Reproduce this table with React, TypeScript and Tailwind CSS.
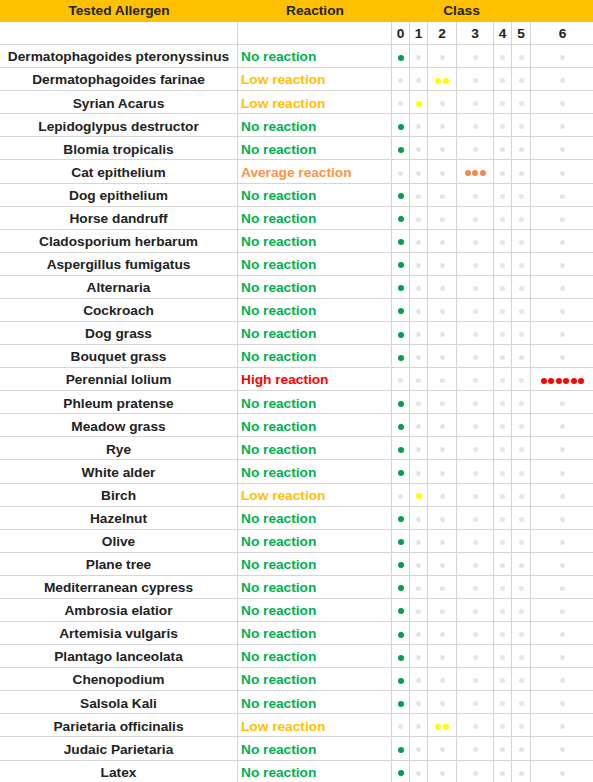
import React from "react";

type Level = "no" | "low" | "avg" | "high";
const rows: [string, Level, number][] = [
  ["Dermatophagoides pteronyssinus", "no", 0],
  ["Dermatophagoides farinae", "low", 2],
  ["Syrian Acarus", "low", 1],
  ["Lepidoglypus destructor", "no", 0],
  ["Blomia tropicalis", "no", 0],
  ["Cat epithelium", "avg", 3],
  ["Dog epithelium", "no", 0],
  ["Horse dandruff", "no", 0],
  ["Cladosporium herbarum", "no", 0],
  ["Aspergillus fumigatus", "no", 0],
  ["Alternaria", "no", 0],
  ["Cockroach", "no", 0],
  ["Dog grass", "no", 0],
  ["Bouquet grass", "no", 0],
  ["Perennial lolium", "high", 6],
  ["Phleum pratense", "no", 0],
  ["Meadow grass", "no", 0],
  ["Rye", "no", 0],
  ["White alder", "no", 0],
  ["Birch", "low", 1],
  ["Hazelnut", "no", 0],
  ["Olive", "no", 0],
  ["Plane tree", "no", 0],
  ["Mediterranean cypress", "no", 0],
  ["Ambrosia elatior", "no", 0],
  ["Artemisia vulgaris", "no", 0],
  ["Plantago lanceolata", "no", 0],
  ["Chenopodium", "no", 0],
  ["Salsola Kali", "no", 0],
  ["Parietaria officinalis", "low", 2],
  ["Judaic Parietaria", "no", 0],
  ["Latex", "no", 0],
];

const labels: Record<Level, string> = {
  no: "No reaction",
  low: "Low reaction",
  avg: "Average reaction",
  high: "High reaction",
};
const textColor: Record<Level, string> = {
  no: "text-[#00b050]",
  low: "text-[#ffc000]",
  avg: "text-[#f79646]",
  high: "text-[#ff0000]",
};
const dotColor: Record<Level, string> = {
  no: "bg-[#00a050]",
  low: "bg-[#ffff00]",
  avg: "bg-[#f08a4b]",
  high: "bg-[#ff0000]",
};

const cell = "border-r border-b border-[#d6d6d6] flex items-center pt-[3px]";

function Dots({ n, active, level }: { n: number; active: boolean; level: Level }) {
  if (!active) {
    return <span className="w-[5px] h-[5px] rounded-full bg-[#e6e6e2]" />;
  }
  const count = Math.max(1, n);
  return (
    <span className="flex gap-[1.5px]">
      {Array.from({ length: count }).map((_, i) => (
        <span key={i} className={`w-[6px] h-[6px] rounded-full ${dotColor[level]}`} />
      ))}
    </span>
  );
}

export default function App() {
  return (
    <div
      className="w-[593px] h-[782px] overflow-hidden bg-white text-[13.7px] font-bold text-[#222]"
      style={{ fontFamily: '"Liberation Sans", Arial, sans-serif' }}
    >
      <div className="grid w-[595px] grid-cols-[238px_154px_18px_18px_29px_37px_18px_19px_64px] grid-rows-[22px_repeat(33,23.08px)]">
        <div className="bg-[#ffc000] flex items-center justify-center pt-[1px]">Tested Allergen</div>
        <div className="bg-[#ffc000] flex items-center justify-center pt-[1px]">Reaction</div>
        <div className="bg-[#ffc000] col-span-6 flex items-center justify-center pt-[1px]">Class</div>
        <div className="bg-[#ffc000]" />

        <div className={cell} />
        <div className={cell} />
        {[0, 1, 2, 3, 4, 5, 6].map((c) => (
          <div key={c} className={`${cell} justify-center`}>
            {c}
          </div>
        ))}

        {rows.map(([name, level, cls]) => (
          <React.Fragment key={name}>
            <div className={`${cell} justify-center`}>{name}</div>
            <div className={`${cell} pl-[3px] ${textColor[level]}`}>{labels[level]}</div>
            {[0, 1, 2, 3, 4, 5, 6].map((c) => (
              <div key={c} className={`${cell} justify-center`}>
                <Dots n={cls} active={c === cls} level={level} />
              </div>
            ))}
          </React.Fragment>
        ))}
      </div>
    </div>
  );
}
